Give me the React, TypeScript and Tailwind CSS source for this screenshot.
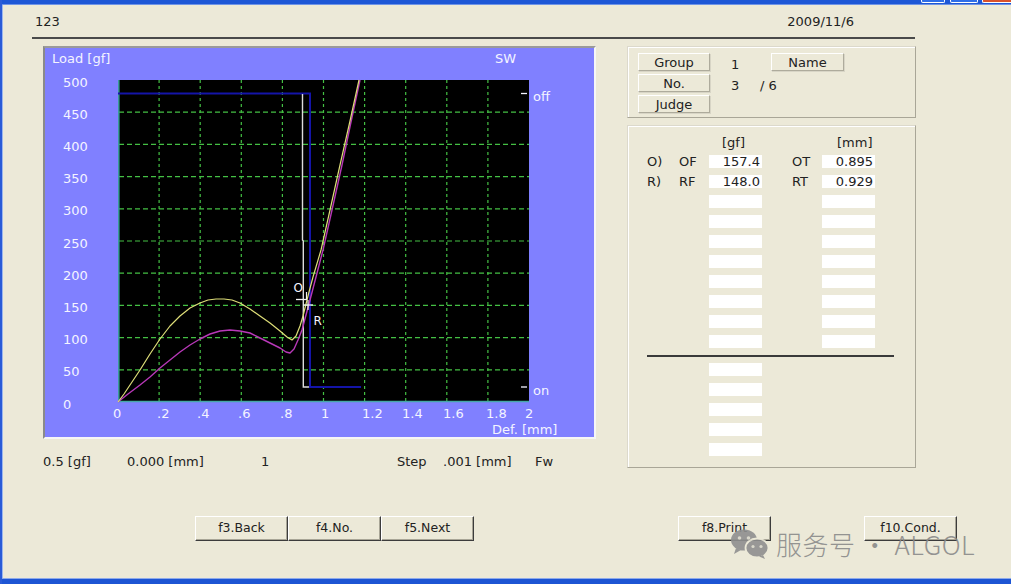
import React from "react";

const yv = (v: number) => 402 - v * 0.644;
const GX = [159.1, 200.2, 241.3, 282.4, 323.5, 364.6, 405.7, 446.8, 487.9];
const GY = [50, 100, 150, 200, 250, 300, 350, 400, 450].map(yv);

const yellow =
  "118,402 124,394 132,382 140,370 150,354 160,339 170,326 180,316 190,308 200,303 208,300 216,299 224,299 232,300 240,303 250,309 260,316 270,323 280,331 287,337 292,340 296,336 300,326 303,316 306,304 309,292 313,277 321,250 330,210 340,165 350,121 359,80";
const magenta =
  "118,402 128,394 140,385 150,377 160,368 170,360 180,352 190,345 200,339 210,334 220,331 230,330 240,331 250,333 260,338 270,343 280,348 286,352 290,353 294,349 298,340 302,330 306,315 310,300 316,277 323,250 332,210 342,165 351,122 360,80";

const yLabels = [500, 450, 400, 350, 300, 250, 200, 150, 100, 50, 0];
const xLabels: [string, number][] = [
  ["0", 113],
  [".2", 157],
  [".4", 197],
  [".6", 238],
  [".8", 280],
  ["1", 321],
  ["1.2", 362],
  ["1.4", 402],
  ["1.6", 443],
  ["1.8", 486],
  ["2", 525],
];

function Chart() {
  const txt = { fontFamily: '"DejaVu Sans", Verdana, sans-serif', fontSize: 13, fill: "#f4f4ff" };
  return (
    <svg width={549} height={389} viewBox="45 48 549 389" className="block overflow-visible">
      <rect x={118} y={80} width={411} height={322} fill="#000" />
      {GY.map((y, i) => (
        <line key={"h" + i} x1={119} x2={529} y1={y} y2={y} stroke="#44c044" strokeWidth={1.2} strokeDasharray="5 3" />
      ))}
      {GX.map((x, i) => (
        <line key={"v" + i} x1={x} x2={x} y1={80} y2={401} stroke="#44c044" strokeWidth={1.2} strokeDasharray="3 3" />
      ))}
      <line x1={118.8} x2={118.8} y1={80} y2={402} stroke="#3a9a9a" strokeWidth={1.6} />
      <line x1={118} x2={529} y1={401.5} y2={401.5} stroke="#46a8a8" strokeWidth={1.6} />
      <polyline points="118,93.5 310,93.5 310,387 361,387" fill="none" stroke="#1414a8" strokeWidth={2} />
      <polyline points="302.5,94 302.5,240 303.3,241 303.3,387 309,387" fill="none" stroke="#dcdcdc" strokeWidth={1.4} />
      <polyline points={magenta} fill="none" stroke="#b838b8" strokeWidth={1.4} strokeLinejoin="round" />
      <polyline points={yellow} fill="none" stroke="#dede78" strokeWidth={1.2} strokeLinejoin="round" />
      <line x1={296} x2={306} y1={299.5} y2={299.5} stroke="#f0f0f0" strokeWidth={1.3} />
      <line x1={306.5} x2={306.5} y1={292} y2={300} stroke="#f0f0f0" strokeWidth={1.2} />
      <line x1={303} x2={313} y1={305} y2={305} stroke="#f0f0f0" strokeWidth={1.3} />
      <line x1={308} x2={308} y1={300} y2={310} stroke="#f0f0f0" strokeWidth={1.2} />
      <text x={293.5} y={292} {...txt} fontSize={12}>O</text>
      <text x={313.5} y={325} {...txt} fontSize={12}>R</text>
      <line x1={521} x2={527} y1={93.5} y2={93.5} stroke="#f4f4ff" strokeWidth={1.3} />
      <line x1={521} x2={527} y1={387} y2={387} stroke="#f4f4ff" strokeWidth={1.3} />
      <text x={52} y={62.5} {...txt}>Load [gf]</text>
      <text x={495} y={63} {...txt}>SW</text>
      <text x={533} y={100.5} {...txt}>off</text>
      <text x={533} y={395} {...txt}>on</text>
      <text x={492} y={434} {...txt}>Def. [mm]</text>
      {yLabels.map((v) => (
        <text key={v} x={63} y={yv(v) + 6.5} {...txt}>
          {v}
        </text>
      ))}
      {xLabels.map(([t, x]) => (
        <text key={t} x={x} y={418} {...txt}>
          {t}
        </text>
      ))}
    </svg>
  );
}

function SmallBtn({ children, w }: { children: React.ReactNode; w: string }) {
  return (
    <div
      className={
        "h-[18px] flex items-center justify-center bg-[#ece9d8] border border-t-white border-l-white border-r-[#aeab9c] border-b-[#aeab9c] shadow-[1px_1px_0_#d8d5c6] text-[13px] leading-[15px] text-[#222] " +
        w
      }
    >
      {children}
    </div>
  );
}

function BigBtn({ children }: { children: React.ReactNode }) {
  return (
    <div className="w-[93px] h-[25px] flex items-center justify-center bg-[#ece9d8] border border-t-white border-l-white border-r-[#3c3c3c] border-b-[#3c3c3c] shadow-[inset_-1px_-1px_0_#a8a596] text-[12.5px] text-[#222]">
      {children}
    </div>
  );
}

function Box({ v }: { v?: string }) {
  return (
    <div className="w-[53px] h-[13px] bg-white text-right pr-[2px] text-[13px] leading-[13px] text-[#222]">{v}</div>
  );
}

function DataRow({ a, b, v1, c, v2 }: { a?: string; b?: string; v1?: string; c?: string; v2?: string }) {
  return (
    <div className="flex h-[13px] items-center pl-[19px] text-[13px] leading-[13px] text-[#222]">
      <span className="w-[32px]">{a}</span>
      <span className="w-[30px]">{b}</span>
      <Box v={v1} />
      <span className="w-[30px]" />
      <span className="w-[30px]">{c}</span>
      <Box v={v2} />
    </div>
  );
}

function WeChat() {
  return (
    <svg width={40} height={32} viewBox="0 0 40 32">
      <ellipse cx={14} cy={12} rx={13} ry={10.5} fill="#8f8f8f" />
      <path d="M6 20 L4 26 L11 22 Z" fill="#8f8f8f" />
      <circle cx={9.5} cy={10} r={1.8} fill="#d8d6ca" />
      <circle cx={18.5} cy={10} r={1.8} fill="#d8d6ca" />
      <ellipse cx={27} cy={20} rx={11.5} ry={9.5} fill="#8f8f8f" stroke="#ece9d8" strokeWidth={1.8} />
      <path d="M33 27 L35 31 L29 28.5 Z" fill="#8f8f8f" />
      <circle cx={23} cy={18.5} r={1.6} fill="#d8d6ca" />
      <circle cx={31} cy={18.5} r={1.6} fill="#d8d6ca" />
    </svg>
  );
}

export default function App() {
  return (
    <div className="relative w-[1011px] h-[584px] overflow-hidden bg-[#ece9d8] border-l-2 border-[#2a5bd7] shadow-[inset_1px_0_0_#9cb6ee] flex flex-col font-['DejaVu_Sans',Verdana,sans-serif] text-[#222]">
      <div className="h-[5px] bg-[#1d57d6] border-b border-[#6f94e6] flex justify-end items-start shrink-0">
        <div className="w-[24px] h-[3px] bg-[#2f6ee8] border-x border-b border-white rounded-b-[2px] mr-[5px]" />
        <div className="w-[28px] h-[3px] bg-[#2f6ee8] border-x border-b border-white rounded-b-[2px] mr-[4px]" />
        <div className="w-[29px] h-[3px] bg-[#d9512c] border-l border-b border-white rounded-bl-[2px]" />
      </div>

      <div className="ml-[30px] w-[883px] h-[34px] border-b-2 border-[#4a4a4a] flex items-center justify-between pl-[3px] pr-[61px] text-[13px] leading-[15px] shrink-0">
        <span>123</span>
        <span>2009/11/6</span>
      </div>

      <div className="mt-[7px] h-[422px] flex items-start shrink-0">
        <div className="ml-[41px] w-[553px] flex flex-col">
          <div className="w-[553px] h-[393px] bg-[#8080ff] border-2 border-t-[#9a9a9a] border-l-[#8a8a8a] border-b-[#f6f6f6] border-r-[#f6f6f6]">
            <Chart />
          </div>
          <div className="mt-[15px] flex text-[13px] leading-[16px]">
            <span className="w-[84px]">0.5 [gf]</span>
            <span className="w-[134px]">0.000 [mm]</span>
            <span className="w-[136px]">1</span>
            <span className="w-[46px]">Step</span>
            <span className="w-[92px]">.001 [mm]</span>
            <span>Fw</span>
          </div>
        </div>

        <div className="ml-[31px] w-[289px] flex flex-col">
          <div className="h-[72px] border border-t-[#dcd9cc] border-l-[#dcd9cc] border-r-[#a9a697] border-b-[#a9a697] shadow-[inset_1px_1px_0_#fff] pt-[6px] pl-[10px] flex flex-col gap-[2px]">
            <div className="flex items-start">
              <SmallBtn w="w-[72px]">Group</SmallBtn>
              <span className="ml-[21px] w-[40px] pt-[4px] text-[13px] leading-[15px]">1</span>
              <SmallBtn w="w-[73px]">Name</SmallBtn>
            </div>
            <div className="flex items-start">
              <SmallBtn w="w-[72px]">No.</SmallBtn>
              <span className="ml-[21px] w-[29px] pt-[4px] text-[13px] leading-[15px]">3</span>
              <span className="pt-[4px] text-[13px] leading-[15px]">/ 6</span>
            </div>
            <div className="flex items-start">
              <SmallBtn w="w-[72px]">Judge</SmallBtn>
            </div>
          </div>

          <div className="mt-[7px] h-[343px] border border-t-[#dcd9cc] border-l-[#dcd9cc] border-r-[#a9a697] border-b-[#a9a697] shadow-[inset_1px_1px_0_#fff] pt-[9px] flex flex-col">
            <div className="flex h-[15px] text-[13px] leading-[15px] pl-[19px]">
              <span className="w-[75px]" />
              <span className="w-[115px]">[gf]</span>
              <span>[mm]</span>
            </div>
            <div className="mt-[5px] flex flex-col gap-[7px]">
              <DataRow a="O)" b="OF" v1="157.4" c="OT" v2="0.895" />
              <DataRow a="R)" b="RF" v1="148.0" c="RT" v2="0.929" />
              <DataRow />
              <DataRow />
              <DataRow />
              <DataRow />
              <DataRow />
              <DataRow />
              <DataRow />
              <DataRow />
            </div>
            <div className="mt-[7px] ml-[19px] w-[247px] h-[2px] bg-[#3a3a3a]" />
            <div className="mt-[6px] ml-[81px] flex flex-col gap-[7px]">
              <Box />
              <Box />
              <Box />
              <Box />
              <Box />
            </div>
          </div>
        </div>
      </div>

      <div className="mt-[48px] flex shrink-0">
        <div className="ml-[193px] flex">
          <BigBtn>f3.Back</BigBtn>
          <BigBtn>f4.No.</BigBtn>
          <BigBtn>f5.Next</BigBtn>
        </div>
        <div className="ml-[204px]">
          <BigBtn>f8.Print</BigBtn>
        </div>
        <div className="ml-[93px]">
          <BigBtn>f10.Cond.</BigBtn>
        </div>
      </div>

      <div className="mt-auto h-[6px] bg-[#1d55d4] border-t border-[#8eaaea] shrink-0" />

      <div className="absolute left-[728px] top-[528px] flex items-center gap-[6px] pointer-events-none opacity-90">
        <WeChat />
        <span className="text-[26px] leading-[30px] text-[#8a8a8a] font-['Noto_Sans_CJK_SC','Noto_Sans',sans-serif] font-light tracking-[0.5px]">
          服务号 · ALGOL
        </span>
      </div>
    </div>
  );
}
